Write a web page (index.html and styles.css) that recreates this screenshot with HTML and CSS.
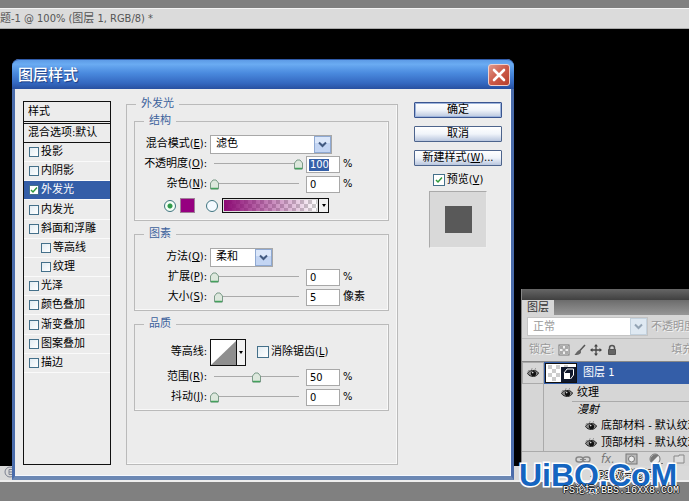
FILE: index.html
```html
<!DOCTYPE html>
<html lang="zh-CN">

<head>
    <meta charset="UTF-8">
    <meta name="viewport" content="width=device-width, initial-scale=1.0">
    <title>图层样式</title>
    <link rel="stylesheet" href="styles.css">
</head>

<body>
    <!-- 共用图标 -->
    <svg class="defs" width="0" height="0" aria-hidden="true">
        <symbol id="eye" viewBox="0 0 12 10">
            <path d="M0.5 5.5 C2 2 9 1 11.5 5 C10 9.500 3 9.500 0.5 5.500Z" fill="#888" stroke="#222" stroke-width="1" />
            <circle cx="6.500" cy="5.500" r="2.600" fill="#111" />
            <circle cx="5.700" cy="4.600" r="0.8" fill="#ddd" />
            <path d="M1 3.500 L2.500 2 M4.500 1.500 L5 0.500 M8 1.500 L8.500 0.500" stroke="#444" stroke-width="0.8" />
        </symbol>
    </svg>

    <div class="doc-tab">题-1 @ 100% (图层 1, RGB/8) *</div>
    <main class="canvas"></main>
    <div class="doc-status">
        <svg width="14" height="12" viewBox="0 0 14 12">
            <circle cx="10" cy="6" r="5" fill="none" stroke="#7c8190" />
            <path d="M12 3.500 H9 V8.500 H12 M9 6 H12" fill="none" stroke="#7c8190" />
        </svg>
    </div>
    <div class="doc-bottom"></div>

    <!-- 图层面板 -->
    <section class="layers">
        <div class="layers-top"></div>
        <div class="layers-tabs"><button type="button" class="layers-tab">图层</button></div>
        <div class="layers-blend">
            <select class="select select-dim" aria-label="混合模式" disabled>
                <option>正常</option>
            </select>
            <span class="dim">不透明度</span>
        </div>
        <div class="layers-lock">
            <span class="dim">锁定:</span>
            <svg width="12" height="12" viewBox="0 0 12 12">
                <rect x="1" y="1" width="10" height="10" fill="#f0f0f0" stroke="#777" />
                <path d="M2 2h3v3h-3z M7 2h3v3h-3z M4.500 4.500h3v3h-3z M2 7h3v3h-3z M7 7h3v3h-3z" fill="#aaa" />
            </svg>
            <svg width="12" height="12" viewBox="0 0 12 12">
                <path d="M11 1 L5.500 7" stroke="#555" stroke-width="1.500" />
                <path d="M6 6 C4 5.500 3 8 0.500 11 C4 11.500 7.500 10 7 7.500Z" fill="#666" />
            </svg>
            <svg width="12" height="12" viewBox="0 0 12 12">
                <path d="M6 1 V11 M1 6 H11" stroke="#444" stroke-width="1.300" />
                <path d="M6 0 L8 2.500 H4Z M6 12 L8 9.500 H4Z M0 6 L2.500 4 V8Z M12 6 L9.500 4 V8Z" fill="#444" />
            </svg>
            <svg width="12" height="12" viewBox="0 0 12 12">
                <path d="M3.500 6 V4 a2.500 2.500 0 0 1 5 0 V6" fill="none" stroke="#555" stroke-width="1.500" />
                <rect x="2" y="5" width="8" height="6" rx="1" fill="#555" />
                <path d="M3 7 H9 M3 9 H9" stroke="#777" />
            </svg>
            <span class="dim fill-label">填充</span>
        </div>
        <div class="layer active">
            <span class="eye-cell"><svg width="12" height="10"><use href="#eye" /></svg></span>
            <svg class="thumb" width="32" height="20" viewBox="0 0 32 20">
                <rect x="0.500" y="0.500" width="31" height="19" fill="#fff" stroke="#111" />
                <path d="M3 2h4v4h-4z M11 2h4v4h-4z M7 6h4v4h-4z M3 10h4v4h-4z M11 10h4v4h-4z M7 14h4v4h-4z M19 2h4v3h-4z" fill="#ccc" />
                <path d="M16 4 H31 V19 H16Z" fill="#10182c" />
                <path d="M19 10 L22 6 H28.500 V12 L25.500 16" fill="none" stroke="#fff" />
                <rect x="19" y="10" width="6" height="6" fill="#fff" />
            </svg>
            <span>图层 1</span>
        </div>
        <div class="layer-tree">
            <div class="tree-row"><svg width="12" height="10"><use href="#eye" /></svg>纹理</div>
            <div class="tree-row tree-head"><i>漫射</i></div>
            <div class="tree-row tree-child"><svg width="12" height="10"><use href="#eye" /></svg>底部材料 - 默认纹理</div>
            <div class="tree-row tree-child"><svg width="12" height="10"><use href="#eye" /></svg>顶部材料 - 默认纹理</div>
        </div>
        <div class="layers-tools">
            <svg width="16" height="12" viewBox="0 0 16 12">
                <rect x="1" y="4" width="7" height="5" rx="2.500" fill="none" stroke="#888" stroke-width="1.500" />
                <rect x="8" y="4" width="7" height="5" rx="2.500" fill="none" stroke="#888" stroke-width="1.500" />
                <path d="M5 6.500 H11" stroke="#888" />
            </svg>
            <span class="fx">fx.</span>
            <svg width="14" height="12" viewBox="0 0 14 12">
                <rect x="1" y="1" width="11" height="10" fill="#bbb" stroke="#777" />
                <circle cx="6.500" cy="6" r="3" fill="#eee" stroke="#777" />
            </svg>
            <svg width="14" height="12" viewBox="0 0 14 12">
                <circle cx="6" cy="6" r="5" fill="#eee" stroke="#777" />
                <path d="M9.500 2.500 A5 5 0 0 0 2.500 9.500Z" fill="#777" />
                <path d="M12 10 h2 v1 h-2z" fill="#777" />
            </svg>
            <svg width="12" height="12" viewBox="0 0 12 12">
                <path d="M1 3 H6 V2 H11 V10 H1Z" fill="#ddd" stroke="#888" />
            </svg>
        </div>
    </section>

    <!-- 图层样式对话框 -->
    <form class="dialog">
        <header class="titlebar">
            <h1>图层样式</h1>
            <button type="button" class="close" aria-label="关闭">
                <svg width="22" height="22" viewBox="0 0 22 22">
                    <path d="M6 6 L16 16 M16 6 L6 16" stroke="#fff" stroke-width="2.600" stroke-linecap="round" />
                </svg>
            </button>
        </header>

        <div class="dialog-body">
            <div class="styles">
                <div class="styles-head">样式</div>
                <div class="styles-head">混合选项:默认</div>
                <ul>
                    <li><label><input type="checkbox">投影</label></li>
                    <li><label><input type="checkbox">内阴影</label></li>
                    <li class="selected"><label><input type="checkbox" checked>外发光</label></li>
                    <li><label><input type="checkbox">内发光</label></li>
                    <li><label><input type="checkbox">斜面和浮雕</label></li>
                    <li class="sub"><label><input type="checkbox">等高线</label></li>
                    <li class="sub"><label><input type="checkbox">纹理</label></li>
                    <li><label><input type="checkbox">光泽</label></li>
                    <li><label><input type="checkbox">颜色叠加</label></li>
                    <li><label><input type="checkbox">渐变叠加</label></li>
                    <li><label><input type="checkbox">图案叠加</label></li>
                    <li><label><input type="checkbox">描边</label></li>
                </ul>
            </div>

            <fieldset class="options">
                <legend>外发光</legend>

                <fieldset class="group">
                    <legend>结构</legend>
                    <div class="row">
                        <label for="mode">混合模式(<u>E</u>):</label>
                        <select id="mode" class="select select-wide">
                            <option>滤色</option>
                        </select>
                    </div>
                    <div class="row">
                        <label for="opacity">不透明度(<u>O</u>):</label>
                        <input type="range" min="0" max="100" value="100" aria-label="不透明度">
                        <input type="text" id="opacity" class="num marked" value="100">
                        <span>%</span>
                    </div>
                    <div class="row">
                        <label for="noise">杂色(<u>N</u>):</label>
                        <input type="range" min="0" max="100" value="0" aria-label="杂色">
                        <input type="text" id="noise" class="num" value="0">
                        <span>%</span>
                    </div>
                    <div class="color-row">
                        <input type="radio" name="fill" aria-label="纯色" checked>
                        <button type="button" class="swatch" aria-label="发光颜色"></button>
                        <input type="radio" name="fill" aria-label="渐变">
                        <button type="button" class="gradient" aria-label="编辑渐变">
                            <span class="gradient-bar"></span>
                            <span class="drop"></span>
                        </button>
                    </div>
                </fieldset>

                <fieldset class="group">
                    <legend>图素</legend>
                    <div class="row">
                        <label for="method">方法(<u>Q</u>):</label>
                        <select id="method" class="select select-small">
                            <option>柔和</option>
                        </select>
                    </div>
                    <div class="row">
                        <label for="spread">扩展(<u>P</u>):</label>
                        <input type="range" min="0" max="100" value="0" aria-label="扩展">
                        <input type="text" id="spread" class="num" value="0">
                        <span>%</span>
                    </div>
                    <div class="row">
                        <label for="size">大小(<u>S</u>):</label>
                        <input type="range" min="0" max="100" value="5" aria-label="大小">
                        <input type="text" id="size" class="num" value="5">
                        <span>像素</span>
                    </div>
                </fieldset>

                <fieldset class="group">
                    <legend>品质</legend>
                    <div class="row row-contour">
                        <label for="contour">等高线:</label>
                        <div class="contour-box">
                            <button type="button" id="contour" class="contour">
                                <svg width="25" height="25" viewBox="0 0 25 25">
                                    <rect width="25" height="25" fill="#fff" />
                                    <path d="M0 25 L25 1 V25Z" fill="#8f8f8f" />
                                </svg>
                                <span class="drop"></span>
                            </button>
                            <label class="check"><input type="checkbox"><span>消除锯齿(<u>L</u>)</span></label>
                        </div>
                    </div>
                    <div class="row">
                        <label for="range">范围(<u>R</u>):</label>
                        <input type="range" min="0" max="100" value="50" aria-label="范围">
                        <input type="text" id="range" class="num" value="50">
                        <span>%</span>
                    </div>
                    <div class="row">
                        <label for="jitter">抖动(<u>J</u>):</label>
                        <input type="range" min="0" max="100" value="0" aria-label="抖动">
                        <input type="text" id="jitter" class="num" value="0">
                        <span>%</span>
                    </div>
                </fieldset>
            </fieldset>

            <div class="actions">
                <button type="submit" class="button default">确定</button>
                <button type="button" class="button">取消</button>
                <button type="button" class="button">新建样式(<u>W</u>)...</button>
                <label class="check"><input type="checkbox" checked><span>预览(<u>V</u>)</span></label>
                <div class="preview"><div class="preview-shape"></div></div>
            </div>
        </div>
    </form>

    <div class="mark">
        <div class="mark-mid">--PS教程论坛--</div>
        <div class="mark-big">UiBQ.CoM</div>
        <div class="mark-small">PS论坛:BBS.16XX8.COM</div>
    </div>
</body>

</html>
```
FILE: styles.css
```css
* {
    box-sizing: border-box;
}

body {
    margin: 0;
    padding-top: 8px;
    min-height: 100vh;
    display: flex;
    flex-direction: column;
    position: relative;
    overflow: hidden;
    background: #808080;
    color: #000;
    font: 11px/14px "DejaVu Sans Condensed", "Noto Sans CJK SC", sans-serif;
}

button,
input,
select {
    margin: 0;
    padding: 0;
    font: inherit;
    color: inherit;
}

svg {
    display: block;
    flex: none;
}

.defs {
    position: absolute;
}

/* 文档窗口 */
.doc-tab {
    height: 21px;
    border-top: 1px solid #f4f4f4;
    border-bottom: 1px solid #aaa;
    background: #dbdbdb;
    color: #555;
    line-height: 19px;
}

.canvas {
    flex: 1;
    background: #000;
}

.doc-status {
    height: 14px;
    background: #d9d9d9;
}

.doc-bottom {
    height: 21px;
    border-top: 2px solid #eee;
}

/* 对话框 */
.dialog {
    position: absolute;
    left: 12px;
    top: 59px;
    width: 502px;
    border: 3px solid #4a6cab;
    border-top: 0;
    border-bottom: 4px solid #6c88b4;
    border-radius: 7px 7px 0 0;
    background: #ececec;
}

.titlebar {
    display: flex;
    align-items: center;
    justify-content: space-between;
    height: 30px;
    margin: 0 -3px;
    padding: 0 4px 0 6px;
    border-top: 1px solid #2f5aa8;
    border-radius: 7px 7px 0 0;
    background: linear-gradient(#5d9be6, #6aabf2 15%, #4a8ade 45%, #3468c0 80%, #2850a0);
}

.titlebar h1 {
    margin: 0;
    color: #fff;
    font-size: 15px;
    font-weight: 500;
    line-height: 20px;
    text-shadow: 1px 1px 1px #1b3a80;
}

.close {
    width: 22px;
    height: 22px;
    border: 1px solid #f0d0cc;
    border-radius: 3px;
    background: linear-gradient(135deg, #e0998c, #cc5a48 50%, #b8402c);
}

.close svg {
    margin: -1px;
}

.dialog-body {
    display: grid;
    grid-template-columns: 88px 1fr 88px;
    gap: 15px;
    padding: 8px 8px 10px;
    border: 1px solid #f6f9ff;
    border-width: 0 1px 1px 0;
}

.styles {
    min-height: 364px;
    margin-top: 4px;
    border: 1px solid #111;
}

.styles-head {
    height: 20px;
    padding-left: 4px;
    border-bottom: 1px solid #111;
    line-height: 20px;
}

.styles-head + .styles-head {
    height: 20px;
    margin-top: 1px;
    border-top: 1px solid #111;
    line-height: 18px;
}

.styles ul {
    display: grid;
    grid-template-rows: repeat(12, 1fr);
    height: 230px;
    margin: 0;
    padding: 0;
    list-style: none;
}

.styles li {
    display: flex;
    align-items: center;
    padding-left: 5px;
    border-bottom: 1px solid #fafafa;
}

.styles li.sub {
    padding-left: 17px;
}

.styles li.selected {
    background: #345ea8;
    color: #fff;
}

.styles label,
.check {
    display: flex;
    align-items: center;
    gap: 2px;
}

input[type="checkbox"] {
    appearance: none;
    width: 10px;
    height: 10px;
    border: 1px solid #44708a;
    background: linear-gradient(135deg, #e2ecf2, #fff);
}

input[type="checkbox"]:checked {
    background: #fff url("data:image/svg+xml,%3Csvg xmlns='http://www.w3.org/2000/svg' viewBox='0 0 8 8'%3E%3Cpath d='M1 4L3 6L7 1.500' fill='none' stroke='%232f9a3a' stroke-width='1.500'/%3E%3C/svg%3E") center / 8px no-repeat;
}

.check input[type="checkbox"] {
    width: 12px;
    height: 12px;
}

fieldset {
    min-width: 0;
    margin: 0;
    border: 1px solid #bababa;
    box-shadow: inset -1px -1px #f8f8f8;
}

legend {
    height: 14px;
    padding: 0 5px;
    color: #3c629c;
}

.options {
    margin-right: 1px;
    padding: 3px 8px 0 7px;
}

.options > legend {
    margin-left: 2px;
}

.group {
    margin-bottom: 6px;
    padding: 6px 0 3px;
}

.group > legend {
    margin-left: 9px;
}

.row {
    display: grid;
    grid-template-columns: 72px 93px 34px 1fr;
    align-items: center;
    column-gap: 3px;
    height: 20px;
    white-space: nowrap;
}

.row > label {
    justify-self: end;
}

.row-contour {
    height: 30px;
}

.select {
    appearance: none;
    height: 19px;
    padding-left: 5px;
    border: 1px solid #a8a8a8;
    border-radius: 0;
    background: url("data:image/svg+xml,%3Csvg xmlns='http://www.w3.org/2000/svg' viewBox='0 0 17 17'%3E%3Crect x='.5' y='.5' width='16' height='16' fill='%23c3d5f3' stroke='%238fa9d2'/%3E%3Cpath d='M1 1H16V7H1Z' fill='%23dbe7fa'/%3E%3Cpath d='M5 6.500L8.500 10L12 6.500' fill='none' stroke='%23425a80' stroke-width='2'/%3E%3C/svg%3E") right center / 17px no-repeat #fff;
}

.select-wide {
    grid-column: 2 / 5;
    width: 122px;
}

.select-small {
    width: 63px;
}

input[type="range"] {
    appearance: none;
    width: 93px;
    height: 12px;
    background: linear-gradient(#aaa, #aaa) center 5px / 85px 1px no-repeat;
}

input[type="range"]::-webkit-slider-thumb {
    appearance: none;
    width: 9px;
    height: 11px;
    background: url("data:image/svg+xml,%3Csvg xmlns='http://www.w3.org/2000/svg' viewBox='0 0 9 11'%3E%3Cpath d='M.5 10V4L3 1H6L8.500 4V10Z' fill='%23dde8dd' stroke='%237b9a88'/%3E%3Cpath d='M1 9.500H8' stroke='%2344a05c' stroke-width='1.500'/%3E%3C/svg%3E") no-repeat;
}

.num {
    width: 34px;
    height: 17px;
    padding-left: 3px;
    border: 1px solid #a8a8a8;
    background: #fff;
}

.num.marked {
    color: #fff;
    background: linear-gradient(#3560a8, #3560a8) 2px 2px / 20px 12px no-repeat #fff;
}

.color-row {
    display: flex;
    align-items: center;
    height: 23px;
    padding-left: 29px;
}

input[type="radio"] {
    appearance: none;
    width: 12px;
    height: 12px;
    border: 1px solid #3f7480;
    border-radius: 50%;
    background: #f4faff;
}

input[type="radio"]:checked {
    background: radial-gradient(circle, #2f9a4a 2px, #f4fff6 3px);
}

.swatch {
    width: 15px;
    height: 15px;
    margin: 0 11px 0 4px;
    border: 1px solid #a08098;
    background: #960080;
}

.gradient {
    display: flex;
    width: 107px;
    height: 15px;
    margin-left: 4px;
    border: 1px solid #111;
    background: #fff;
}

.gradient-bar {
    flex: 1;
    height: 100%;
    border: 1px solid #ddd;
    background:
        linear-gradient(to right, #8c0a74, rgba(140, 10, 116, 0)),
        repeating-conic-gradient(#ccc 0 25%, #fff 0 50%) 0 0 / 8px 8px;
}

.drop {
    display: flex;
    align-items: center;
    justify-content: center;
    width: 10px;
    height: 100%;
    border-left: 1px solid #111;
    background: #f2f2f2;
}

.drop::after {
    content: "";
    border: 2px solid transparent;
    border-top: 3px solid #000;
    border-bottom: 0;
}

.contour-box {
    grid-column: 2 / 5;
    display: flex;
    align-items: center;
    gap: 11px;
}

.contour {
    display: flex;
    width: 36px;
    height: 27px;
    border: 1px solid #111;
}

.actions {
    display: flex;
    flex-direction: column;
    align-items: center;
    gap: 8px;
    padding-top: 5px;
}

.button {
    width: 100%;
    height: 16px;
    border: 1px solid #4d648c;
    border-radius: 1px;
    background: linear-gradient(#fff, #f0f4fa 50%, #b9c6de);
    line-height: 14px;
    white-space: nowrap;
}

.button.default {
    border-color: #3a5590;
    box-shadow: inset 0 0 0 1px #9db4dc;
}

.actions .check {
    margin-top: -1px;
}

.preview {
    display: grid;
    place-items: center;
    width: 58px;
    height: 57px;
    margin-top: -4px;
    border: 1px solid #aaa;
    border-right-color: #eee;
    border-bottom-color: #eee;
    background: #d9d9d9;
}

.preview-shape {
    width: 27px;
    height: 27px;
    background: #595959;
}

/* 图层面板 */
.layers {
    position: absolute;
    left: 521px;
    right: 0;
    top: 289px;
    overflow: hidden;
    border-left: 1px solid #888;
    background: #d6d6d6;
    white-space: nowrap;
}

.layers-top {
    height: 11px;
    background: linear-gradient(#666, #404040);
}

.layers-tabs {
    height: 15px;
    background: linear-gradient(#6c6c6c, #969696);
}

.layers-tab {
    width: 32px;
    height: 15px;
    border: 0;
    background: #d6d6d6;
    color: #333;
    line-height: 15px;
}

.layers-blend {
    display: flex;
    align-items: center;
    gap: 3px;
    height: 24px;
    padding-left: 5px;
    border-bottom: 1px solid #bbb;
}

.select-dim {
    flex: none;
    width: 121px;
    border-color: #c4c4c4;
    color: #999;
    background-image: url("data:image/svg+xml,%3Csvg xmlns='http://www.w3.org/2000/svg' viewBox='0 0 17 17'%3E%3Crect x='.5' y='.5' width='16' height='16' fill='%23dfe9f2' stroke='%23c4d2de'/%3E%3Cpath d='M5 6.500L8.500 10L12 6.500' fill='none' stroke='%2394a4b4' stroke-width='2'/%3E%3C/svg%3E");
    opacity: 1;
}

.dim {
    color: #999;
    text-shadow: 1px 1px #f4f4f4;
}

.layers-lock {
    display: flex;
    align-items: center;
    gap: 4px;
    height: 23px;
    padding-left: 7px;
    border-bottom: 1px solid #888;
}

.fill-label {
    margin-left: 49px;
}

.layer {
    display: flex;
    align-items: center;
    height: 22px;
}

.layer.active {
    background: #345ea8;
    color: #fff;
}

.eye-cell {
    display: grid;
    place-items: center;
    width: 22px;
    height: 100%;
    border: 1px solid #aaa;
    background: #d6d6d6;
}

.thumb {
    margin: 0 6px 0 1px;
}

.layer-tree {
    margin-left: 21px;
    border-left: 1px solid #aaa;
}

.tree-row {
    display: flex;
    align-items: center;
    gap: 4px;
    height: 17px;
    padding-left: 17px;
}

.tree-head {
    height: 16px;
    margin-left: 28px;
    padding-left: 5px;
    border-top: 1px solid #aaa;
}

.tree-child {
    padding-left: 41px;
}

.layers-tools {
    display: flex;
    align-items: center;
    gap: 10px;
    height: 15px;
    padding-left: 53px;
    border-top: 1px solid #aaa;
}

.fx {
    color: #777;
    font-style: italic;
    font-size: 12px;
}

/* 水印 */
.mark {
    position: absolute;
    left: 519px;
    right: 0;
    bottom: 4px;
    display: grid;
    white-space: nowrap;
}

.mark > div {
    grid-area: 1 / 1;
}

.mark-big {
    align-self: start;
    color: #1565c0;
    font: bold 32px/36px "Liberation Sans", Arial, sans-serif;
    paint-order: stroke fill;
    -webkit-text-stroke: 3px #fff;
}

.mark-mid,
.mark-small {
    color: #fff;
    text-shadow: 1px 0 #222, -1px 0 #222, 0 1px #222, 0 -1px #222;
}

.mark-mid {
    padding: 12px 0 0 72px;
}

.mark-small {
    align-self: end;
    padding: 28px 0 0 44px;
    font: 10px/12px "Liberation Mono", "Noto Sans CJK SC", monospace;
}
```
